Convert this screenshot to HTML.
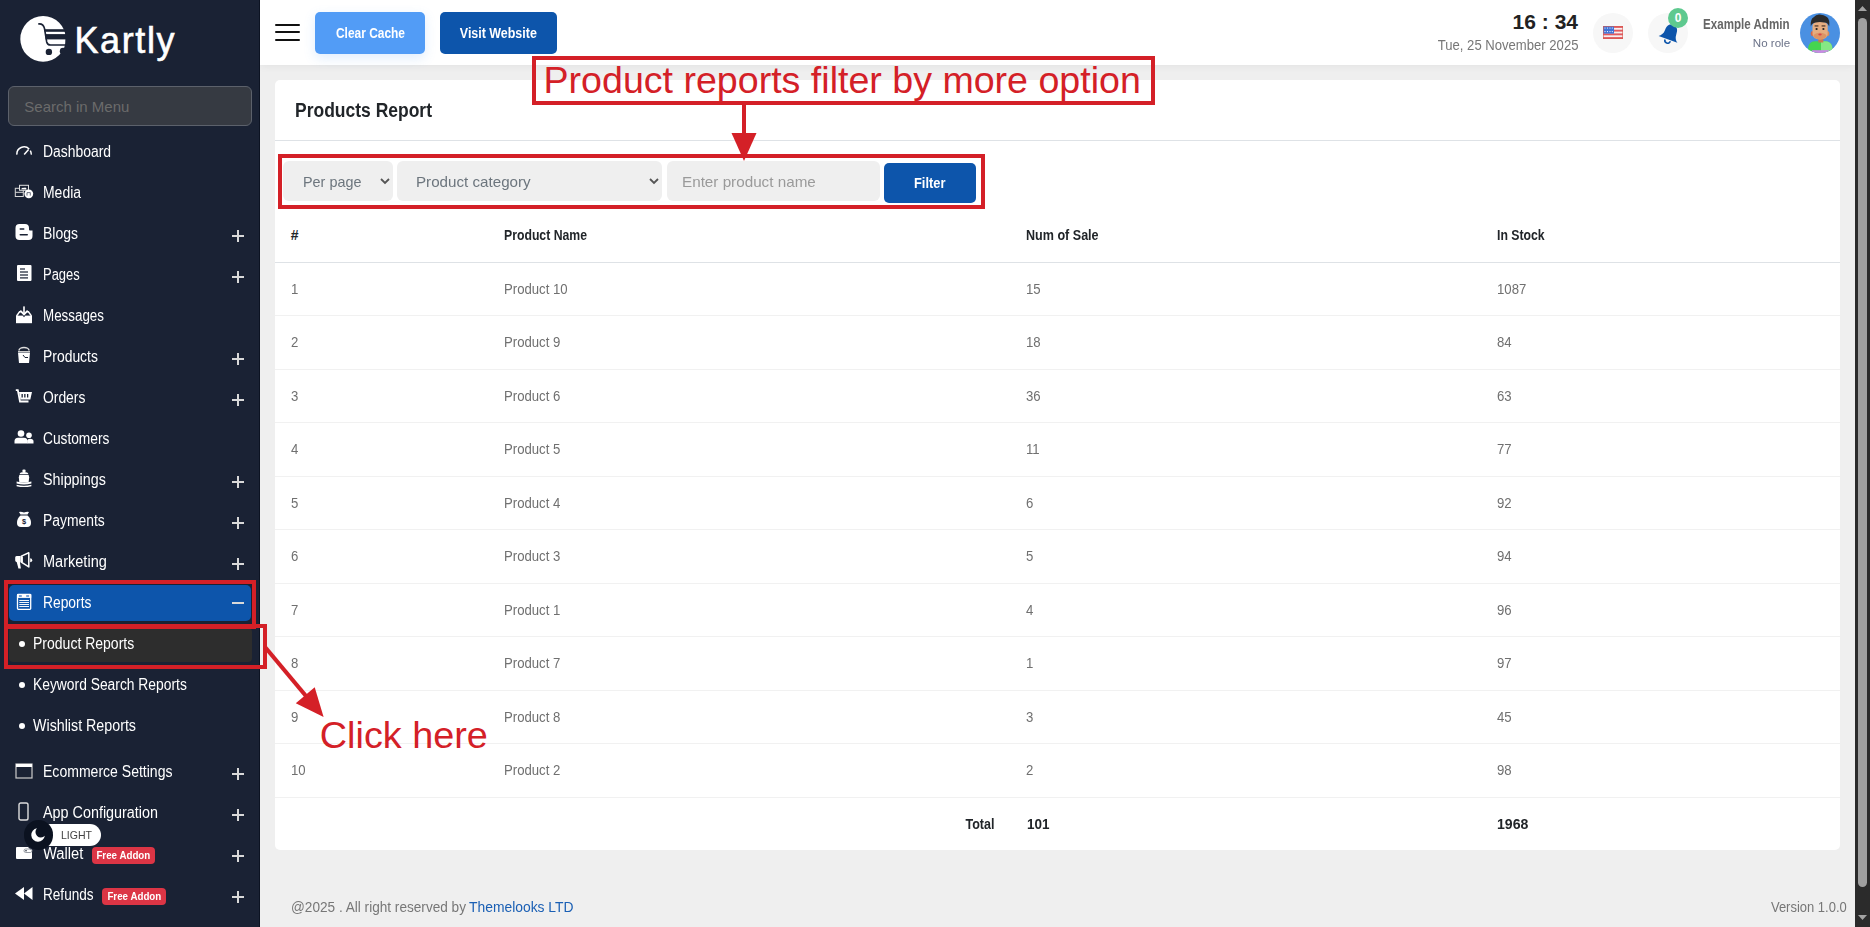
<!DOCTYPE html><html><head><meta charset="utf-8"><title>Products Report</title><style>
*{box-sizing:border-box;margin:0;padding:0}
html,body{width:1870px;height:927px;overflow:hidden;background:#efefef;font-family:"Liberation Sans",sans-serif}
.a{position:absolute}
.t{position:absolute;white-space:nowrap}
.plus{position:absolute;left:232px;width:12px;height:12px}
.plus:before{content:"";position:absolute;left:5px;top:0;width:2px;height:12px;background:#d9d9d9}
.plus:after{content:"";position:absolute;left:0;top:5px;width:12px;height:2px;background:#d9d9d9}
.ann{position:absolute;border:4.2px solid #d42027}
</style></head><body>
<div class="a" style="left:0;top:0;width:260px;height:927px;background:#1a2234;border-right:1px solid #0c1322"></div>
<svg class="a" style="left:16px;top:12px" width="54" height="54" viewBox="0 0 54 54">
<defs><mask id="lm"><rect width="54" height="54" fill="#fff"/>
<path d="M22.2 12 Q27.2 11.2 28.5 16.5 L30.7 30 Q31.4 33 34.6 33 H54" stroke="#000" stroke-width="1.6" fill="none"/>
<rect x="28.7" y="17.2" width="30" height="2.6" fill="#000"/>
<rect x="29.5" y="22.1" width="30" height="5.3" fill="#000"/>
<rect x="49.4" y="0" width="10" height="54" fill="#000"/>
<circle cx="47.2" cy="39.2" r="3.4" fill="#000"/>
<circle cx="32.9" cy="39.9" r="3.2" fill="#000"/>
</mask></defs>
<circle cx="27.1" cy="26.9" r="22.8" fill="#fff" mask="url(#lm)"/>
</svg>
<div class="t" style="left:74.5px;top:18px;font-size:36px;line-height:46px;color:#fff;letter-spacing:1.6px;-webkit-text-stroke:0.6px #fff">Kartly</div>
<div class="a" style="left:8px;top:86px;width:244px;height:40px;background:#363a42;border:1px solid #5c616b;border-radius:6px"></div>
<div class="t" style="top:99px;font-size:15px;line-height:15px;color:#6b6b6b;left:24.3px;">Search in Menu</div>
<svg class="a" style="left:15px;top:145px" width="18" height="12" viewBox="0 0 18 12"><path d="M1.9 9.6 A7.2 7.2 0 0 1 14.2 4" fill="none" stroke="#fff" stroke-width="1.5"/><path d="M15.3 5.6 A7.2 7.2 0 0 1 16.3 9.6" fill="none" stroke="#fff" stroke-width="1.5"/><path d="M9.2 9.6 L13.6 4.6" stroke="#fff" stroke-width="1.5"/></svg>
<div class="t" style="top:144px;font-size:16px;line-height:16px;color:#fff;left:42.6px;transform:scaleX(0.8687);transform-origin:left;">Dashboard</div>
<svg class="a" style="left:12px;top:180px" width="24" height="24" viewBox="0 0 24 24"><rect x="3.3" y="8.3" width="8" height="8.2" fill="none" stroke="#d8d8d8" stroke-width="1"/><line x1="3.3" y1="12.3" x2="11.3" y2="12.3" stroke="#d8d8d8" stroke-width="1"/><rect x="7.5" y="5.3" width="9" height="5" fill="#1a2234" stroke="#e0e0e0" stroke-width="1"/><path d="M9 9.2 Q10.5 7.2 12 8 Q13 6.8 14.5 8.4 L14.2 9.4 Z" fill="#fff"/><circle cx="16.8" cy="13.8" r="4.4" fill="#fff"/><path d="M15 15.6 V12.6 H18.3 V15.6" fill="none" stroke="#5a6070" stroke-width="0.9"/></svg>
<div class="t" style="top:185px;font-size:16px;line-height:16px;color:#fff;left:42.6px;transform:scaleX(0.8720);transform-origin:left;">Media</div>
<svg class="a" style="left:15px;top:223px" width="18" height="18" viewBox="0 0 18 18"><path d="M4.5 1 H10 A4 4 0 0 1 14 5 V6.5 A1 1 0 0 0 15 7.5 H17.5 V13 A4 4 0 0 1 13.5 17 H4.5 A4 4 0 0 1 0.5 13 V5 A4 4 0 0 1 4.5 1 Z" fill="#fff"/><rect x="4.5" y="5.2" width="5" height="1.5" rx="0.7" fill="#1a2234"/><rect x="4.5" y="11" width="8.5" height="1.6" rx="0.8" fill="#1a2234"/></svg>
<div class="t" style="top:226px;font-size:16px;line-height:16px;color:#fff;left:42.6px;transform:scaleX(0.8743);transform-origin:left;">Blogs</div>
<span class="plus" style="top:230px"></span>
<svg class="a" style="left:16px;top:264px" width="16" height="18" viewBox="0 0 16 18"><rect x="1" y="1" width="14.5" height="16" rx="1" fill="#fff"/><rect x="4" y="4.4" width="5" height="1.2" fill="#1a2234"/><rect x="4" y="7.4" width="8" height="1.2" fill="#1a2234"/><rect x="4" y="10.4" width="8" height="1.2" fill="#1a2234"/><rect x="4" y="13.3" width="8" height="1.2" fill="#1a2234"/></svg>
<div class="t" style="top:267px;font-size:16px;line-height:16px;color:#fff;left:42.6px;transform:scaleX(0.8088);transform-origin:left;">Pages</div>
<span class="plus" style="top:271px"></span>
<svg class="a" style="left:12px;top:303px" width="24" height="24" viewBox="0 0 24 24"><rect x="4" y="12.6" width="16" height="7.6" fill="#fff"/><path d="M4.6 12.9 L7.6 8.7 H9.2" stroke="#fff" stroke-width="1.5" fill="none"/><path d="M19.4 12.9 L16.4 8.7 H14.8" stroke="#fff" stroke-width="1.5" fill="none"/><rect x="11.2" y="3.4" width="1.6" height="7" fill="#fff"/><path d="M8.3 7.6 L12 11.4 L15.7 7.6" stroke="#fff" stroke-width="1.8" fill="none"/><path d="M10.5 12.5 L12 14.3 L13.5 12.5 Z" fill="#1a2234"/></svg>
<div class="t" style="top:308px;font-size:16px;line-height:16px;color:#fff;left:42.6px;transform:scaleX(0.8365);transform-origin:left;">Messages</div>
<svg class="a" style="left:17px;top:346px" width="14" height="18" viewBox="0 0 14 18"><path d="M1 6.5 H13 L12 17 H2 Z" fill="#fff"/><rect x="1" y="5" width="12" height="1" fill="#ccc"/><path d="M2 4.5 A5 3 0 0 1 12 4.5" fill="none" stroke="#ddd" stroke-width="1.5"/><path d="M6 9 L8 11.5 H11" stroke="#1a2234" stroke-width="1" fill="none"/></svg>
<div class="t" style="top:349px;font-size:16px;line-height:16px;color:#fff;left:42.6px;transform:scaleX(0.8695);transform-origin:left;">Products</div>
<span class="plus" style="top:353px"></span>
<svg class="a" style="left:15px;top:389px" width="18" height="15" viewBox="0 0 18 15"><path d="M0.8 1.2 H2.8 L5 12.5 H13.5" fill="none" stroke="#fff" stroke-width="1.8"/><path d="M4 3 H17 L15.3 10.5 H5.5 Z" fill="#fff"/><rect x="6.5" y="5" width="1.3" height="3.5" fill="#1a2234"/><rect x="9.2" y="5" width="1.3" height="3.5" fill="#1a2234"/><rect x="12" y="5" width="1.3" height="3.5" fill="#1a2234"/></svg>
<div class="t" style="top:390px;font-size:16px;line-height:16px;color:#fff;left:42.6px;transform:scaleX(0.8670);transform-origin:left;">Orders</div>
<span class="plus" style="top:394px"></span>
<svg class="a" style="left:14px;top:429px" width="20" height="15" viewBox="0 0 20 15"><circle cx="7" cy="4.5" r="3.3" fill="#fff"/><path d="M0.5 14.5 V12 Q0.5 9 4 8.8 H10 Q13.5 9 13.5 12 V14.5 Z" fill="#fff"/><circle cx="15" cy="6.3" r="2.8" fill="#fff"/><path d="M13.2 14.5 V11.5 Q13.5 9.8 16 9.8 Q19.5 10 19.5 12.5 V14.5 Z" fill="#fff"/></svg>
<div class="t" style="top:431px;font-size:16px;line-height:16px;color:#fff;left:42.6px;transform:scaleX(0.8583);transform-origin:left;">Customers</div>
<svg class="a" style="left:12px;top:467px" width="24" height="24" viewBox="0 0 24 24"><rect x="10.3" y="2.6" width="3.4" height="2.6" rx="1.3" fill="#fff"/><path d="M7.6 7.2 Q8 5 12 5 Q16 5 16.4 7.2 Z" fill="#fff"/><path d="M7.3 8.1 H16.7 L17.2 10.5 L16.6 15.6 H7.4 L6.8 10.5 Z" fill="#fff"/><path d="M4.6 14.6 Q12 16.4 19.4 14.6 V16.5 Q12 18.3 4.6 16.5 Z" fill="#fff"/><path d="M4.6 17.8 Q12 19.6 19.4 17.8 V19.2 Q12 21 4.6 19.2 Z" fill="#fff"/></svg>
<div class="t" style="top:472px;font-size:16px;line-height:16px;color:#fff;left:42.6px;transform:scaleX(0.8936);transform-origin:left;">Shippings</div>
<span class="plus" style="top:476px"></span>
<svg class="a" style="left:15px;top:510px" width="18" height="18" viewBox="0 0 18 18"><path d="M4 2 Q6 1.5 9 2.5 Q12 1.5 14 2 L12.5 4.5 H5.5 Z" fill="#fff"/><path d="M5.5 5.5 H12.5 Q16 8 16 13 Q16 17 12 17 H6 Q2 17 2 13 Q2 8 5.5 5.5 Z" fill="#fff"/><text x="9" y="14" text-anchor="middle" font-size="7.5" font-weight="bold" fill="#1a2234" font-family="Liberation Sans">$</text></svg>
<div class="t" style="top:513px;font-size:16px;line-height:16px;color:#fff;left:42.6px;transform:scaleX(0.8673);transform-origin:left;">Payments</div>
<span class="plus" style="top:517px"></span>
<svg class="a" style="left:12px;top:549px" width="24" height="24" viewBox="0 0 24 24"><path d="M3.2 8.6 Q3.1 7 4.6 7 H8.6 V13.2 H7.9 L8.9 19.4 H6.4 L4.8 13.2 Q3.2 13 3.2 11.6 Z" fill="#fff"/><path d="M9.3 7.1 L16.8 3.8 V17.9 L9.3 13.2 Z" fill="none" stroke="#fff" stroke-width="1.5" stroke-linejoin="round"/><rect x="9.6" y="7.4" width="1.3" height="5.6" fill="#fff"/><path d="M18.2 9.2 A2 2 0 0 1 18.2 13.2 Z" fill="#fff"/></svg>
<div class="t" style="top:554px;font-size:16px;line-height:16px;color:#fff;left:42.6px;transform:scaleX(0.9082);transform-origin:left;">Marketing</div>
<span class="plus" style="top:558px"></span>
<div class="a" style="left:8.5px;top:585px;width:242.5px;height:36px;background:#0d55ab;border-radius:5px"></div>
<svg class="a" style="left:12px;top:590px" width="24" height="24" viewBox="0 0 24 24"><rect x="5.5" y="4.5" width="13.2" height="14.9" rx="0.8" fill="none" stroke="#fff" stroke-width="1.3"/><rect x="5" y="4" width="14.2" height="3.9" fill="#fff"/><rect x="6.9" y="5" width="2.9" height="2" fill="#7aa3d8"/><rect x="14.2" y="5" width="2.9" height="2" fill="#7aa3d8"/><g fill="#fff"><rect x="7.3" y="10" width="9.7" height="0.95"/><rect x="7.3" y="12.05" width="9.7" height="0.95"/><rect x="7.3" y="14.05" width="9.7" height="0.95"/><rect x="7.3" y="16.05" width="9.7" height="0.95"/></g></svg>
<div class="t" style="top:595px;font-size:16px;line-height:16px;color:#fff;left:42.6px;transform:scaleX(0.8638);transform-origin:left;">Reports</div>
<span class="a" style="left:232px;top:602px;width:12px;height:2px;background:#d9d9d9"></span>
<div class="a" style="left:9px;top:628px;width:243px;height:34px;background:#2d2d2d;border-radius:4px"></div>
<span class="a" style="left:19px;top:641px;width:6px;height:6px;border-radius:50%;background:#fff"></span>
<div class="t" style="top:636px;font-size:16px;line-height:16px;color:#fff;left:32.6px;transform:scaleX(0.8754);transform-origin:left;">Product Reports</div>
<span class="a" style="left:19px;top:682px;width:6px;height:6px;border-radius:50%;background:#fff"></span>
<div class="t" style="top:677px;font-size:16px;line-height:16px;color:#fff;left:32.6px;transform:scaleX(0.8647);transform-origin:left;">Keyword Search Reports</div>
<span class="a" style="left:19px;top:723px;width:6px;height:6px;border-radius:50%;background:#fff"></span>
<div class="t" style="top:718px;font-size:16px;line-height:16px;color:#fff;left:32.6px;transform:scaleX(0.8912);transform-origin:left;">Wishlist Reports</div>
<svg class="a" style="left:15px;top:763px" width="18" height="16" viewBox="0 0 18 16"><rect x="1" y="1" width="16" height="14" fill="none" stroke="#ccc" stroke-width="1.2"/><rect x="1" y="1" width="16" height="3" fill="#fff"/></svg>
<div class="t" style="top:764px;font-size:16px;line-height:16px;color:#fff;left:42.6px;transform:scaleX(0.8773);transform-origin:left;">Ecommerce Settings</div>
<span class="plus" style="top:768px"></span>
<svg class="a" style="left:18px;top:802px" width="12" height="19" viewBox="0 0 12 19"><rect x="1" y="1" width="9" height="17" rx="1.8" fill="none" stroke="#ddd" stroke-width="1.4"/></svg>
<div class="t" style="top:805px;font-size:16px;line-height:16px;color:#fff;left:42.6px;transform:scaleX(0.8978);transform-origin:left;">App Configuration</div>
<span class="plus" style="top:809px"></span>
<svg class="a" style="left:15px;top:846px" width="18" height="14" viewBox="0 0 18 14"><path d="M1 2 Q1 1 2 1 H13 L15.5 3.5 H17 V12 Q17 13 16 13 H2 Q1 13 1 12 Z" fill="#fff"/><rect x="9" y="3" width="8" height="3.5" rx="1.7" fill="none" stroke="#8a9099" stroke-width="0.9"/><circle cx="11" cy="4.8" r="0.8" fill="#1a2234"/></svg>
<div class="t" style="top:846px;font-size:16px;line-height:16px;color:#fff;left:42.6px;transform:scaleX(0.9188);transform-origin:left;">Wallet</div>
<span class="plus" style="top:850px"></span>
<svg class="a" style="left:14px;top:886px" width="20" height="15" viewBox="0 0 20 15"><path d="M10 1 V14 L1 7.5 Z" fill="#fff"/><path d="M18.5 1 V14 L10 7.5 Z" fill="#fff"/></svg>
<div class="t" style="top:887px;font-size:16px;line-height:16px;color:#fff;left:42.6px;transform:scaleX(0.8491);transform-origin:left;">Refunds</div>
<span class="plus" style="top:891px"></span>
<div class="a" style="left:92px;top:847px;width:63px;height:17px;background:#dc3545;border-radius:4px"></div>
<div class="t" style="top:850px;font-size:11px;line-height:11px;color:#fff;font-weight:700;left:93.14px;transform:scaleX(0.8877);transform-origin:center;">Free Addon</div>
<div class="a" style="left:102px;top:888px;width:64px;height:17px;background:#dc3545;border-radius:4px"></div>
<div class="t" style="top:891px;font-size:11px;line-height:11px;color:#fff;font-weight:700;left:103.64px;transform:scaleX(0.8877);transform-origin:center;">Free Addon</div>
<div class="a" style="left:25px;top:824px;width:76px;height:22px;background:#fff;border-radius:11px"></div>
<div class="t" style="top:830px;font-size:11.5px;line-height:11.5px;color:#444;left:60.8px;transform:scaleX(0.9151);transform-origin:left;">LIGHT</div>
<div class="a" style="left:23.5px;top:820px;width:29.5px;height:29.5px;border-radius:50%;background:#0b1220"></div>
<svg class="a" style="left:30px;top:827px" width="16" height="16" viewBox="0 0 16 16"><path d="M7 1.2 A6.8 6.8 0 1 0 14.8 8.8 A5 5 0 0 1 7 1.2 Z" fill="#fff"/></svg>
<div class="a" style="left:260px;top:0;width:1595px;height:65px;background:#fff;box-shadow:0 1px 8px rgba(0,0,0,0.06);clip-path:inset(0 -20px -20px 0)"></div>
<div class="a" style="left:275px;top:23.5px;width:25px;height:2.2px;background:#111;border-radius:1px"></div>
<div class="a" style="left:275px;top:31.3px;width:25px;height:2.2px;background:#111;border-radius:1px"></div>
<div class="a" style="left:275px;top:39.2px;width:25px;height:2.2px;background:#111;border-radius:1px"></div>
<div class="a" style="left:315px;top:12px;width:110px;height:42px;border-radius:5px;background:#529cf6;box-shadow:0 4px 12px rgba(82,156,246,0.18)"></div>
<div class="t" style="top:26px;font-size:14px;line-height:14px;color:#fff;font-weight:700;left:329.53px;transform:scaleX(0.8525);transform-origin:center;">Clear Cache</div>
<div class="a" style="left:440px;top:12px;width:117px;height:42px;border-radius:5px;background:#0d55ab"></div>
<div class="t" style="top:26px;font-size:14px;line-height:14px;color:#fff;font-weight:700;left:455.19px;transform:scaleX(0.8889);transform-origin:center;">Visit Website</div>
<div class="t" style="top:11px;font-size:21px;line-height:21px;color:#222;font-weight:700;left:1512.61px;">16 : 34</div>
<div class="t" style="top:38px;font-size:14px;line-height:14px;color:#777;left:1427.53px;transform:scaleX(0.9351);transform-origin:right;">Tue, 25 November 2025</div>
<div class="a" style="left:1593px;top:13px;width:40px;height:40px;border-radius:50%;background:#f7f7f7"></div>
<svg class="a" style="left:1603px;top:26px" width="20" height="13" viewBox="0 0 20 13"><rect width="20" height="13" fill="#f6f0f0"/><g fill="#e25a60"><rect y="0" width="20" height="1.9"/><rect y="3.7" width="20" height="1.9"/><rect y="7.4" width="20" height="1.9"/><rect y="11.1" width="20" height="1.9"/></g><rect width="11" height="7.6" fill="#3f73d8"/><g fill="#fff"><circle cx="2" cy="2" r="0.6"/><circle cx="4.5" cy="2" r="0.6"/><circle cx="7" cy="2" r="0.6"/><circle cx="9.3" cy="2" r="0.6"/><circle cx="2" cy="5.6" r="0.6"/><circle cx="4.5" cy="5.6" r="0.6"/><circle cx="7" cy="5.6" r="0.6"/><circle cx="9.3" cy="5.6" r="0.6"/></g><rect x="0.3" y="0.3" width="19.4" height="12.4" fill="none" stroke="#d65a50" stroke-width="0.6"/></svg>
<div class="a" style="left:1648px;top:13px;width:40px;height:40px;border-radius:50%;background:#f7f7f7"></div>
<svg class="a" style="left:1657px;top:22px" width="26" height="24" viewBox="0 0 26 24"><g transform="rotate(20 13 12)"><path d="M13 2.5 C8 2.5 7 6.5 7 10 C7 14 5.2 16.2 3 17.8 H23 C20.8 16.2 19 14 19 10 C19 6.5 18 2.5 13 2.5 Z" fill="#0d55ab"/><path d="M10.2 18.8 A2.8 2.8 0 0 0 15.8 18.8" fill="none" stroke="#0d55ab" stroke-width="1.6"/></g></svg>
<div class="a" style="left:1668px;top:8px;width:20px;height:20px;border-radius:50%;background:#5ec98f"></div>
<div class="t" style="top:12px;font-size:12px;line-height:12px;color:#fff;font-weight:700;left:1674.66px;">0</div>
<div class="t" style="top:17px;font-size:14px;line-height:14px;color:#666;font-weight:700;left:1685.48px;transform:scaleX(0.8267);transform-origin:right;">Example Admin</div>
<div class="t" style="top:38px;font-size:11.5px;line-height:11.5px;color:#6b7288;left:1752.92px;transform:scaleX(1.0060);transform-origin:right;">No role</div>
<svg class="a" style="left:1800px;top:13px" width="40" height="40" viewBox="0 0 40 40"><defs><clipPath id="av"><circle cx="20" cy="20" r="20"/></clipPath></defs><g clip-path="url(#av)"><rect width="40" height="40" fill="#4a90e2"/><path d="M7.5 40 L8.5 33 Q10 28.5 15 28.3 H25 Q30.5 28.5 32 33 L33 40 Z" fill="#45d54f"/><path d="M21 28.3 H25 Q30.5 28.5 32 33 L33 40 H21 Z" fill="#86e884"/><rect x="12" y="37.2" width="17" height="3" fill="#c98ae6"/><rect x="18.3" y="24" width="5" height="5.5" fill="#c97a50"/><ellipse cx="12.4" cy="20.5" rx="1.7" ry="2.6" fill="#d4674a"/><ellipse cx="27.7" cy="20.5" rx="1.7" ry="2.6" fill="#d98a5a"/><path d="M12.5 13 Q12.5 8.5 20 8.5 Q27.7 8.5 27.7 13 V21 Q27.7 26.4 20 26.4 Q12.5 26.4 12.5 21 Z" fill="#e6ad80"/><ellipse cx="20" cy="23" rx="6.5" ry="3.3" fill="#d9895a" opacity="0.7"/><path d="M10.8 13.5 Q10 6 14 4 Q16 1.2 19.5 1.5 Q24 1.5 27 4 Q30 6.5 29.2 13.5 Q27.5 9 24 9.6 Q20 8.6 15.5 9.6 Q12 10 10.8 13.5 Z" fill="#2b2b2b"/><rect x="14.6" y="12.4" width="3.8" height="1.1" fill="#3a2a20"/><rect x="21.6" y="12.4" width="3.8" height="1.1" fill="#3a2a20"/><circle cx="16.6" cy="16" r="1.1" fill="#222"/><circle cx="23.4" cy="16" r="1.1" fill="#222"/><ellipse cx="20" cy="21.4" rx="1.7" ry="1" fill="#d9434a"/></g></svg>
<div class="a" style="left:275px;top:80px;width:1565px;height:770px;background:#fff;border-radius:5px"></div>
<div class="t" style="top:100px;font-size:20px;line-height:20px;color:#212529;font-weight:700;left:295px;transform:scaleX(0.8744);transform-origin:left;">Products Report</div>
<div class="a" style="left:275px;top:140px;width:1565px;height:1px;background:#dee2e6"></div>
<div class="a" style="left:283px;top:161px;width:110px;height:40px;background:#efefef;border-radius:6px"></div><svg class="a" style="left:380px;top:178px" width="10" height="7" viewBox="0 0 10 7"><path d="M1 1 L5 5 L9 1" fill="none" stroke="#555" stroke-width="1.8"/></svg>
<div class="t" style="top:174px;font-size:15px;line-height:15px;color:#6c757d;left:302.7px;transform:scaleX(0.9591);transform-origin:left;">Per page</div>
<div class="a" style="left:397px;top:161px;width:265px;height:40px;background:#efefef;border-radius:6px"></div><svg class="a" style="left:649px;top:178px" width="10" height="7" viewBox="0 0 10 7"><path d="M1 1 L5 5 L9 1" fill="none" stroke="#555" stroke-width="1.8"/></svg>
<div class="t" style="top:174px;font-size:15px;line-height:15px;color:#6c757d;left:416.3px;transform:scaleX(1.0114);transform-origin:left;">Product category</div>
<div class="a" style="left:666.5px;top:161px;width:213.5px;height:40px;background:#efefef;border-radius:6px"></div>
<div class="t" style="top:174px;font-size:15px;line-height:15px;color:#9a9a9a;left:681.8px;transform:scaleX(1.0156);transform-origin:left;">Enter product name</div>
<div class="a" style="left:884px;top:163px;width:92px;height:40px;background:#0d55ab;border-radius:5px"></div>
<div class="t" style="top:176px;font-size:14.5px;line-height:14.5px;color:#fff;font-weight:700;left:912.27px;transform:scaleX(0.8857);transform-origin:center;">Filter</div>
<div class="t" style="top:228px;font-size:14px;line-height:14px;color:#212529;font-weight:700;left:290.8px;">#</div>
<div class="t" style="top:228px;font-size:14px;line-height:14px;color:#212529;font-weight:700;left:504px;transform:scaleX(0.8744);transform-origin:left;">Product Name</div>
<div class="t" style="top:228px;font-size:14px;line-height:14px;color:#212529;font-weight:700;left:1026.2px;transform:scaleX(0.8973);transform-origin:left;">Num of Sale</div>
<div class="t" style="top:228px;font-size:14px;line-height:14px;color:#212529;font-weight:700;left:1496.5px;transform:scaleX(0.8757);transform-origin:left;">In Stock</div>
<div class="a" style="left:275px;top:262px;width:1565px;height:1px;background:#dee2e6"></div>
<div class="t" style="top:282px;font-size:14px;line-height:14px;color:#707070;left:290.8px;transform:scaleX(0.9400);transform-origin:left;">1</div>
<div class="t" style="top:282px;font-size:14px;line-height:14px;color:#707070;left:504px;transform:scaleX(0.9400);transform-origin:left;">Product 10</div>
<div class="t" style="top:282px;font-size:14px;line-height:14px;color:#707070;left:1026.2px;transform:scaleX(0.9400);transform-origin:left;">15</div>
<div class="t" style="top:282px;font-size:14px;line-height:14px;color:#707070;left:1496.5px;transform:scaleX(0.9400);transform-origin:left;">1087</div>
<div class="a" style="left:275px;top:315.4px;width:1565px;height:1px;background:#f1f1f1"></div>
<div class="t" style="top:335px;font-size:14px;line-height:14px;color:#707070;left:290.8px;transform:scaleX(0.9400);transform-origin:left;">2</div>
<div class="t" style="top:335px;font-size:14px;line-height:14px;color:#707070;left:504px;transform:scaleX(0.9400);transform-origin:left;">Product 9</div>
<div class="t" style="top:335px;font-size:14px;line-height:14px;color:#707070;left:1026.2px;transform:scaleX(0.9400);transform-origin:left;">18</div>
<div class="t" style="top:335px;font-size:14px;line-height:14px;color:#707070;left:1496.5px;transform:scaleX(0.9400);transform-origin:left;">84</div>
<div class="a" style="left:275px;top:368.9px;width:1565px;height:1px;background:#f1f1f1"></div>
<div class="t" style="top:389px;font-size:14px;line-height:14px;color:#707070;left:290.8px;transform:scaleX(0.9400);transform-origin:left;">3</div>
<div class="t" style="top:389px;font-size:14px;line-height:14px;color:#707070;left:504px;transform:scaleX(0.9400);transform-origin:left;">Product 6</div>
<div class="t" style="top:389px;font-size:14px;line-height:14px;color:#707070;left:1026.2px;transform:scaleX(0.9400);transform-origin:left;">36</div>
<div class="t" style="top:389px;font-size:14px;line-height:14px;color:#707070;left:1496.5px;transform:scaleX(0.9400);transform-origin:left;">63</div>
<div class="a" style="left:275px;top:422.4px;width:1565px;height:1px;background:#f1f1f1"></div>
<div class="t" style="top:442px;font-size:14px;line-height:14px;color:#707070;left:290.8px;transform:scaleX(0.9400);transform-origin:left;">4</div>
<div class="t" style="top:442px;font-size:14px;line-height:14px;color:#707070;left:504px;transform:scaleX(0.9400);transform-origin:left;">Product 5</div>
<div class="t" style="top:442px;font-size:14px;line-height:14px;color:#707070;left:1026.2px;transform:scaleX(0.9400);transform-origin:left;">11</div>
<div class="t" style="top:442px;font-size:14px;line-height:14px;color:#707070;left:1496.5px;transform:scaleX(0.9400);transform-origin:left;">77</div>
<div class="a" style="left:275px;top:475.9px;width:1565px;height:1px;background:#f1f1f1"></div>
<div class="t" style="top:496px;font-size:14px;line-height:14px;color:#707070;left:290.8px;transform:scaleX(0.9400);transform-origin:left;">5</div>
<div class="t" style="top:496px;font-size:14px;line-height:14px;color:#707070;left:504px;transform:scaleX(0.9400);transform-origin:left;">Product 4</div>
<div class="t" style="top:496px;font-size:14px;line-height:14px;color:#707070;left:1026.2px;transform:scaleX(0.9400);transform-origin:left;">6</div>
<div class="t" style="top:496px;font-size:14px;line-height:14px;color:#707070;left:1496.5px;transform:scaleX(0.9400);transform-origin:left;">92</div>
<div class="a" style="left:275px;top:529.4px;width:1565px;height:1px;background:#f1f1f1"></div>
<div class="t" style="top:549px;font-size:14px;line-height:14px;color:#707070;left:290.8px;transform:scaleX(0.9400);transform-origin:left;">6</div>
<div class="t" style="top:549px;font-size:14px;line-height:14px;color:#707070;left:504px;transform:scaleX(0.9400);transform-origin:left;">Product 3</div>
<div class="t" style="top:549px;font-size:14px;line-height:14px;color:#707070;left:1026.2px;transform:scaleX(0.9400);transform-origin:left;">5</div>
<div class="t" style="top:549px;font-size:14px;line-height:14px;color:#707070;left:1496.5px;transform:scaleX(0.9400);transform-origin:left;">94</div>
<div class="a" style="left:275px;top:582.9px;width:1565px;height:1px;background:#f1f1f1"></div>
<div class="t" style="top:603px;font-size:14px;line-height:14px;color:#707070;left:290.8px;transform:scaleX(0.9400);transform-origin:left;">7</div>
<div class="t" style="top:603px;font-size:14px;line-height:14px;color:#707070;left:504px;transform:scaleX(0.9400);transform-origin:left;">Product 1</div>
<div class="t" style="top:603px;font-size:14px;line-height:14px;color:#707070;left:1026.2px;transform:scaleX(0.9400);transform-origin:left;">4</div>
<div class="t" style="top:603px;font-size:14px;line-height:14px;color:#707070;left:1496.5px;transform:scaleX(0.9400);transform-origin:left;">96</div>
<div class="a" style="left:275px;top:636.4px;width:1565px;height:1px;background:#f1f1f1"></div>
<div class="t" style="top:656px;font-size:14px;line-height:14px;color:#707070;left:290.8px;transform:scaleX(0.9400);transform-origin:left;">8</div>
<div class="t" style="top:656px;font-size:14px;line-height:14px;color:#707070;left:504px;transform:scaleX(0.9400);transform-origin:left;">Product 7</div>
<div class="t" style="top:656px;font-size:14px;line-height:14px;color:#707070;left:1026.2px;transform:scaleX(0.9400);transform-origin:left;">1</div>
<div class="t" style="top:656px;font-size:14px;line-height:14px;color:#707070;left:1496.5px;transform:scaleX(0.9400);transform-origin:left;">97</div>
<div class="a" style="left:275px;top:689.9px;width:1565px;height:1px;background:#f1f1f1"></div>
<div class="t" style="top:710px;font-size:14px;line-height:14px;color:#707070;left:290.8px;transform:scaleX(0.9400);transform-origin:left;">9</div>
<div class="t" style="top:710px;font-size:14px;line-height:14px;color:#707070;left:504px;transform:scaleX(0.9400);transform-origin:left;">Product 8</div>
<div class="t" style="top:710px;font-size:14px;line-height:14px;color:#707070;left:1026.2px;transform:scaleX(0.9400);transform-origin:left;">3</div>
<div class="t" style="top:710px;font-size:14px;line-height:14px;color:#707070;left:1496.5px;transform:scaleX(0.9400);transform-origin:left;">45</div>
<div class="a" style="left:275px;top:743.4px;width:1565px;height:1px;background:#f1f1f1"></div>
<div class="t" style="top:763px;font-size:14px;line-height:14px;color:#707070;left:290.8px;transform:scaleX(0.9400);transform-origin:left;">10</div>
<div class="t" style="top:763px;font-size:14px;line-height:14px;color:#707070;left:504px;transform:scaleX(0.9400);transform-origin:left;">Product 2</div>
<div class="t" style="top:763px;font-size:14px;line-height:14px;color:#707070;left:1026.2px;transform:scaleX(0.9400);transform-origin:left;">2</div>
<div class="t" style="top:763px;font-size:14px;line-height:14px;color:#707070;left:1496.5px;transform:scaleX(0.9400);transform-origin:left;">98</div>
<div class="a" style="left:275px;top:796.9px;width:1565px;height:1px;background:#f1f1f1"></div>
<div class="t" style="top:817px;font-size:14px;line-height:14px;color:#212529;font-weight:700;left:961.79px;transform:scaleX(0.8949);transform-origin:right;">Total</div>
<div class="t" style="top:817px;font-size:14px;line-height:14px;color:#212529;font-weight:700;left:1026.9px;transform:scaleX(0.9632);transform-origin:left;">101</div>
<div class="t" style="top:817px;font-size:14px;line-height:14px;color:#212529;font-weight:700;left:1496.6px;transform:scaleX(1.0078);transform-origin:left;">1968</div>
<div class="t" style="top:900px;font-size:14px;line-height:14px;color:#777;left:290.6px;transform:scaleX(0.9723);transform-origin:left;">@2025 . All right reserved by</div>
<div class="t" style="top:900px;font-size:14px;line-height:14px;color:#1a5fb4;left:469.2px;transform:scaleX(0.9899);transform-origin:left;">Themelooks LTD</div>
<div class="t" style="top:900px;font-size:14px;line-height:14px;color:#777;left:1764.67px;transform:scaleX(0.9274);transform-origin:right;">Version 1.0.0</div>
<div class="a" style="left:1855px;top:0;width:15px;height:927px;background:#2b2b2b"></div>
<svg class="a" style="left:1857px;top:5px" width="11" height="7" viewBox="0 0 11 7"><path d="M1 6 L5.5 1 L10 6 Z" fill="#a3a3a3"/></svg>
<div class="a" style="left:1858px;top:18px;width:9px;height:869px;background:#a0a0a0;border-radius:4.5px"></div>
<svg class="a" style="left:1857px;top:914px" width="11" height="7" viewBox="0 0 11 7"><path d="M1 1 L5.5 6 L10 1 Z" fill="#a3a3a3"/></svg>
<div class="ann" style="left:531.5px;top:56px;width:623.5px;height:49px"></div>
<div class="t" style="top:62px;font-size:37.6px;line-height:37.6px;color:#d42027;left:543.5px;">Product reports filter by more option</div>
<div class="a" style="left:741.8px;top:105px;width:4.4px;height:30px;background:#d42027"></div>
<svg class="a" style="left:731px;top:133px" width="26" height="29" viewBox="0 0 26 29"><path d="M0.5 0 L25.5 0 L13 28 Z" fill="#d42027"/></svg>
<div class="ann" style="left:277.5px;top:154px;width:707px;height:54.5px"></div>
<div class="ann" style="left:4px;top:580px;width:251.5px;height:48.5px"></div>
<div class="ann" style="left:4px;top:623.5px;width:262.5px;height:45.5px"></div>
<svg class="a" style="left:260px;top:640px" width="70" height="80" viewBox="0 0 70 80"><line x1="5" y1="7" x2="51" y2="62" stroke="#d42027" stroke-width="4.2"/><path d="M54.7 47.2 L35.8 63.3 L63.6 77 Z" fill="#d42027"/></svg>
<div class="t" style="top:717px;font-size:37.8px;line-height:37.8px;color:#d42027;left:319.8px;">Click here</div>
</body></html>
